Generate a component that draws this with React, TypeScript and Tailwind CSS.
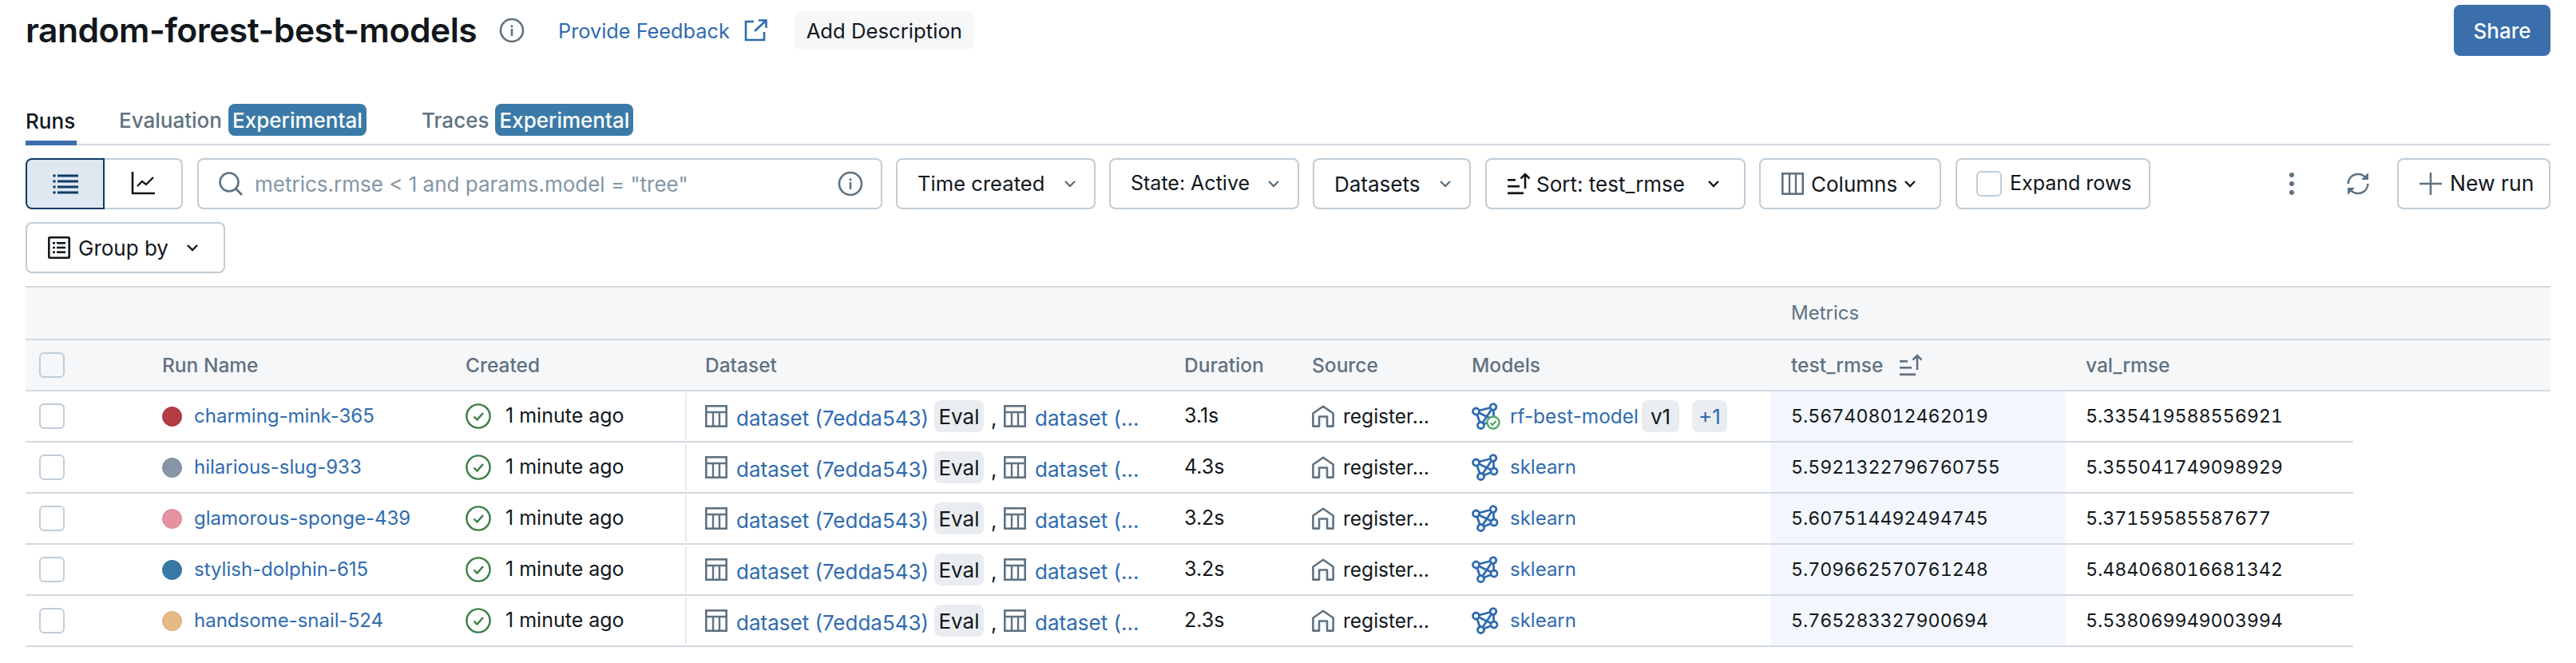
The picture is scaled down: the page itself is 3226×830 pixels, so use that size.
import React from "react";

const S = ({ w, h, children, className = "", vb }: { w: number; h: number; children: React.ReactNode; className?: string; vb?: string }) => (
  <svg width={w} height={h} viewBox={vb ?? `0 0 ${w} ${h}`} fill="none" className={`shrink-0 ${className}`}>
    {children}
  </svg>
);

const Chevron = ({ dark = false }: { dark?: boolean }) => (
  <S w={16} h={10} className={dark ? "text-[#11171c]" : "text-[#5f7281]"}>
    <path d="M2 2l6 6 6-6" stroke="currentColor" strokeWidth="2.4" />
  </S>
);

const Info = () => (
  <S w={32} h={32} vb="0 0 32 32" className="text-[#5f7281]">
    <circle cx="16" cy="16" r="14" stroke="currentColor" strokeWidth="2.6" />
    <rect x="14.7" y="14" width="2.6" height="9" fill="currentColor" />
    <rect x="14.7" y="9.5" width="2.6" height="2.8" fill="currentColor" />
  </S>
);

const ListIcon = () => (
  <S w={32} h={26} className="text-[#0e3b66]">
    <g fill="currentColor">
      <circle cx="2" cy="3" r="1.8" /><circle cx="2" cy="10" r="1.8" /><circle cx="2" cy="17" r="1.8" /><circle cx="2" cy="24" r="1.8" />
      <rect x="6" y="1.5" width="26" height="3" /><rect x="6" y="8.5" width="26" height="3" /><rect x="6" y="15.5" width="26" height="3" /><rect x="6" y="22.5" width="26" height="3" />
    </g>
  </S>
);

const ChartIcon = () => (
  <S w={30} h={30} className="text-[#11171c]">
    <path d="M2 0v27h28" stroke="currentColor" strokeWidth="2.6" />
    <path d="M8 18l6-6 5 4 9-9" stroke="currentColor" strokeWidth="2.4" />
  </S>
);

const GroupIcon = () => (
  <S w={28} h={28} className="text-[#11171c]">
    <rect x="1.3" y="1.3" width="25.4" height="25.4" rx="1" stroke="currentColor" strokeWidth="2.6" />
    <g fill="currentColor">
      <rect x="6" y="7" width="3" height="2.6" /><rect x="11" y="7" width="11" height="2.6" />
      <rect x="6" y="12.7" width="3" height="2.6" /><rect x="11" y="12.7" width="11" height="2.6" />
      <rect x="6" y="18.4" width="3" height="2.6" /><rect x="11" y="18.4" width="11" height="2.6" />
    </g>
  </S>
);

const SortIcon = ({ c = "text-[#11171c]" }: { c?: string }) => (
  <S w={30} h={28} className={c}>
    <g fill="currentColor">
      <rect x="1" y="8" width="10" height="2.6" />
      <rect x="1" y="16" width="15" height="2.6" />
      <rect x="1" y="24.4" width="20" height="2.8" />
    </g>
    <path d="M23 20V2M17.5 7.5L23 2l5.5 5.5" stroke="currentColor" strokeWidth="2.6" />
  </S>
);

const ColumnsIcon = () => (
  <S w={28} h={28} className="text-[#5f7281]">
    <rect x="1.3" y="1.3" width="25.4" height="25.4" stroke="currentColor" strokeWidth="2.6" />
    <path d="M10 1v26M18 1v26" stroke="currentColor" strokeWidth="2.4" />
  </S>
);

const TableIcon = () => (
  <S w={28} h={28} className="text-[#5f7281]">
    <rect x="1.3" y="1.3" width="25.4" height="25.4" stroke="currentColor" strokeWidth="2.6" />
    <path d="M1 9h26M10 9v18M18 9v18" stroke="currentColor" strokeWidth="2.4" />
  </S>
);

const HomeIcon = () => (
  <S w={28} h={28} className="text-[#5f7281]">
    <path d="M1.4 26.6V10.5L14 1.8l12.6 8.7v16.1H19V14.5H9v12.1z" stroke="currentColor" strokeWidth="2.6" strokeLinejoin="round" />
  </S>
);

const CheckCircle = () => (
  <S w={32} h={32} className="text-[#3a7d44]">
    <circle cx="16" cy="16" r="14.6" stroke="currentColor" strokeWidth="2.4" />
    <path d="M10.5 16.5l4 4 7.5-8.5" stroke="currentColor" strokeWidth="2.4" />
  </S>
);

const ModelIcon = ({ badge = false }: { badge?: boolean }) => (
  <S w={36} h={34} className="text-[#2f6bb0]">
    <g stroke="currentColor" strokeWidth="2.8">
      <path d="M5.5 11L27 5.5M5.5 11L28 22M5.5 11L11.5 28.5M27 5.5L11.5 28.5M27 5.5L28 22M28 22L11.5 28.5" />
      <circle cx="5.5" cy="11" r="4" fill="#fff" />
      <circle cx="27" cy="5.5" r="3.8" fill="#fff" />
      <circle cx="28" cy="22" r="4" fill="#fff" />
      <circle cx="11.5" cy="28.5" r="4" fill="#fff" />
    </g>
    {badge && (
      <g>
        <circle cx="27" cy="25" r="7.5" fill="#fff" stroke="#55a868" strokeWidth="2.4" />
        <path d="M23.5 25.5l2.5 2.5 4.5-5" stroke="#55a868" strokeWidth="2.2" />
      </g>
    )}
  </S>
);

const Btn = ({ w, children, between = true }: { w: string; children: React.ReactNode; between?: boolean }) => (
  <div className={`${w} h-[64px] shrink-0 flex items-center ${between ? "justify-between" : ""} border-2 border-[#c0cdd8] rounded-[8px] text-[26px] text-[#11171c] bg-white`}>
    {children}
  </div>
);

const Checkbox = ({ bg = "bg-white" }: { bg?: string }) => (
  <div className={`w-[32px] h-[32px] shrink-0 rounded-[6px] border-2 border-[#c0cdd8] ${bg}`} />
);

const Tag = ({ children, blue = false, w }: { children: React.ReactNode; blue?: boolean; w: string }) => (
  <span className={`${w} h-[40px] shrink-0 rounded-[8px] bg-[#e9edf1] flex items-center justify-center text-[26px] ${blue ? "text-[#2f6bb0]" : "text-[#11171c]"}`}>
    {children}
  </span>
);

const Badge = () => (
  <span className="ml-[8px] h-[40px] w-[173px] rounded-[8px] bg-[#3b7aa8] text-white text-[26px] flex items-center justify-center">Experimental</span>
);

const grid = "grid grid-cols-[146px_380px_300px_600px_160px_200px_400px_369px_360px]";

const rows = [
  { name: "charming-mink-365", color: "bg-[#b53b45]", ring: "border-[#a8323d]", dur: "3.1s", test: "5.567408012462019", val: "5.335419588556921", first: true },
  { name: "hilarious-slug-933", color: "bg-[#8696a6]", ring: "border-[#7a8a9a]", dur: "4.3s", test: "5.5921322796760755", val: "5.355041749098929" },
  { name: "glamorous-sponge-439", color: "bg-[#e691a2]", ring: "border-[#d98497]", dur: "3.2s", test: "5.607514492494745", val: "5.37159585587677" },
  { name: "stylish-dolphin-615", color: "bg-[#3a78a8]", ring: "border-[#2f6c9c]", dur: "3.2s", test: "5.709662570761248", val: "5.484068016681342" },
  { name: "handsome-snail-524", color: "bg-[#e6b986]", ring: "border-[#d9a970]", dur: "2.3s", test: "5.765283327900694", val: "5.538069949003994" },
];

const H = ({ children, className = "" }: { children?: React.ReactNode; className?: string }) => (
  <div className={`pl-[25px] flex items-center text-[#5f7281] font-medium text-[24.5px] ${className}`}>{children}</div>
);

export default function App() {
  return (
    <div className="w-[3226px] h-[830px] bg-white px-[32px] overflow-hidden font-['Inter',sans-serif] text-[#11171c]">
      {/* title bar */}
      <div className="pt-[6px] flex items-start justify-between">
        <div className="h-[64px] flex items-center">
          <h1 className="text-[42.6px] font-semibold tracking-[-0.5px] leading-none w-[593px] whitespace-nowrap">random-forest-best-models</h1>
          <Info />
          <a className="ml-[42px] pt-[2px] text-[25.3px] text-[#2f6bb0]">Provide Feedback</a>
          <S w={30} h={28} className="ml-[18px] text-[#2f6bb0]">
            <path d="M12 3H2v23h23V16" stroke="currentColor" strokeWidth="2.6" />
            <path d="M13 15L27 2M18 1.5h9.5V11" stroke="currentColor" strokeWidth="2.6" />
          </S>
          <div className="ml-[33px] h-[48px] w-[225px] rounded-[8px] bg-[#f6f7f9] flex items-center justify-center pt-[2px] text-[25.7px]">Add Description</div>
        </div>
        <button className="h-[64px] w-[121px] rounded-[8px] bg-[#3a6fac] text-white text-[26px] font-medium">Share</button>
      </div>

      {/* tabs */}
      <div className="mt-[60px] h-[52px] flex border-b-2 border-[#d1d9e1] text-[26px] font-medium text-[#5f7281]">
        <div className="h-[52px] w-[64px] border-b-[6px] border-[#3a6fac] text-[#11171c] flex items-center pb-[4px]">Runs</div>
        <div className="ml-[53px] h-[40px] flex items-center">Evaluation<Badge /></div>
        <div className="ml-[69px] h-[40px] flex items-center">Traces<Badge /></div>
      </div>

      {/* toolbar */}
      <div className="mt-[16px] flex items-center">
        <div className="w-[197px] h-[64px] flex shrink-0">
          <div className="w-[99px] border-2 border-[#0e3b66] bg-[#dfe7f1] rounded-l-[8px] flex items-center justify-center"><ListIcon /></div>
          <div className="w-[98px] border-2 border-l-0 border-[#c0cdd8] rounded-r-[8px] flex items-center justify-center"><ChartIcon /></div>
        </div>
        <div className="ml-[18px] w-[858px] h-[64px] shrink-0 border-2 border-[#c0cdd8] rounded-[8px] flex items-center pl-[24px] pr-[22px]">
          <S w={32} h={32} className="text-[#5f7281]">
            <circle cx="14" cy="14" r="11.5" stroke="currentColor" strokeWidth="2.6" />
            <path d="M22 22l8 8" stroke="currentColor" strokeWidth="2.8" />
          </S>
          <span className="ml-[14px] text-[26px] text-[#8396a5] flex-1">metrics.rmse &lt; 1 and params.model = "tree"</span>
          <Info />
        </div>
        <div className="ml-[17px]"><Btn w="w-[250px]"><span className="pl-[25px] text-[25.6px]">Time created</span><span className="pr-[22px] flex"><Chevron /></span></Btn></div>
        <div className="ml-[17px]"><Btn w="w-[238px]"><span className="pl-[25px] text-[25px]">State: Active</span><span className="pr-[22px] flex"><Chevron /></span></Btn></div>
        <div className="ml-[17px]"><Btn w="w-[198px]"><span className="pl-[25px]">Datasets</span><span className="pr-[22px] flex"><Chevron /></span></Btn></div>
        <div className="ml-[18px]"><Btn w="w-[326px]"><span className="pl-[25px] flex items-center gap-[7px]"><SortIcon />Sort: test_rmse</span><span className="pr-[30px] flex"><Chevron dark /></span></Btn></div>
        <div className="ml-[17px]"><Btn w="w-[228px]" between={false}><span className="pl-[26px] flex items-center gap-[9px]"><ColumnsIcon />Columns</span><span className="ml-[8px] flex"><Chevron dark /></span></Btn></div>
        <div className="ml-[18px]"><Btn w="w-[244px]" between={false}><span className="pl-[24px] flex items-center gap-[10px] text-[25px]"><Checkbox />Expand rows</span></Btn></div>
        <div className="flex-1 flex items-center justify-end">
          <S w={12} h={30} className="text-[#5f7281] mr-[62px]">
            <g fill="currentColor"><circle cx="6" cy="4" r="3" /><circle cx="6" cy="15" r="3" /><circle cx="6" cy="26" r="3" /></g>
          </S>
          <S w={30} h={30} className="text-[#5f7281] mr-[34px]">
            <path d="M2.5 15A12.5 12.5 0 0 1 25 8M27.5 15A12.5 12.5 0 0 1 5 22" stroke="currentColor" strokeWidth="2.6" />
            <path d="M28 1v9h-9zM2 29v-9h9z" fill="currentColor" />
          </S>
          <Btn w="w-[192px]" between={false}>
            <span className="pl-[25px] flex items-center gap-[9px] text-[26.5px]">
              <S w={30} h={30} className="text-[#5f7281]"><path d="M15 1v28M1 15h28" stroke="currentColor" strokeWidth="2.6" /></S>
              New run
            </span>
          </Btn>
        </div>
      </div>
      <div className="mt-[16px]">
        <Btn w="w-[250px]" between={false}>
          <span className="pl-[26px] flex items-center gap-[10px]"><GroupIcon />Group by</span>
          <span className="ml-[22px] flex"><Chevron dark /></span>
        </Btn>
      </div>

      {/* table */}
      <div className="mt-[16px]">
        <div className={`${grid} h-[66px] bg-[#f6f7f9] border-t-2 border-[#d1d9e1]`}>
          <H className="col-start-8 !text-[24px] !font-normal">Metrics</H>
        </div>
        <div className={`${grid} h-[66px] bg-[#f6f7f9] border-y-2 border-[#d1d9e1]`}>
          <div className="pl-[17px] flex items-center"><Checkbox bg="bg-[#f6f7f9]" /></div>
          <H>Run Name</H>
          <H>Created</H>
          <H>Dataset</H>
          <H>Duration</H>
          <H>Source</H>
          <H>Models</H>
          <H>test_rmse<span className="ml-[20px] flex"><SortIcon c="text-[#5f7281]" /></span></H>
          <H>val_rmse</H>
        </div>
        {rows.map((r) => (
          <div key={r.name} className={`${grid} w-[2915px] h-[64px] border-b-2 border-[#d1d9e1] text-[26px]`}>
            <div className="pl-[17px] flex items-center"><Checkbox /></div>
            <div className="pl-[25px] flex items-center">
              <span className={`w-[25px] h-[25px] rounded-full border ${r.color} ${r.ring}`} />
              <span className="ml-[15px] text-[#2f6bb0] text-[24px]">{r.name}</span>
            </div>
            <div className="pl-[25px] flex items-center">
              <CheckCircle />
              <span className="ml-[18px] text-[25px]">1 minute ago</span>
            </div>
            <div className="pl-[25px] flex items-center relative">
              <span className="absolute left-0 top-[2px] bottom-[2px] w-[2px] bg-[#e6eaee]" />
              <TableIcon />
              <span className="ml-[11px] text-[#2f6bb0] pt-[4px] whitespace-nowrap w-[238px]">dataset (7edda543)</span>
              <span className="ml-[10px]"><Tag w="w-[62px]">Eval</Tag></span>
              <span className="ml-[9px] w-[16px] pt-[4px]">,</span>
              <TableIcon />
              <span className="ml-[11px] text-[#2f6bb0] pt-[4px] whitespace-nowrap">dataset (…</span>
            </div>
            <div className="pl-[25px] flex items-center text-[25px]">{r.dur}</div>
            <div className="pl-[25px] flex items-center text-[24.5px]">
              <HomeIcon />
              <span className="ml-[11px] whitespace-nowrap">register…</span>
            </div>
            <div className="pl-[25px] flex items-center">
              <ModelIcon badge={r.first} />
              {r.first ? (
                <>
                  <span className="ml-[12px] text-[#2f6bb0] text-[24.4px] w-[165px] whitespace-nowrap">rf-best-model</span>
                  <Tag w="w-[47px]">v1</Tag>
                  <span className="ml-[16px]"><Tag w="w-[44px]" blue>+1</Tag></span>
                </>
              ) : (
                <span className="ml-[12px] text-[#2f6bb0] text-[24px]">sklearn</span>
              )}
            </div>
            <div className="pl-[25px] flex items-center bg-[#f3f7fd] text-[23.2px] tabular-nums">{r.test}</div>
            <div className="pl-[25px] flex items-center text-[23.2px] tabular-nums">{r.val}</div>
          </div>
        ))}
      </div>
    </div>
  );
}
